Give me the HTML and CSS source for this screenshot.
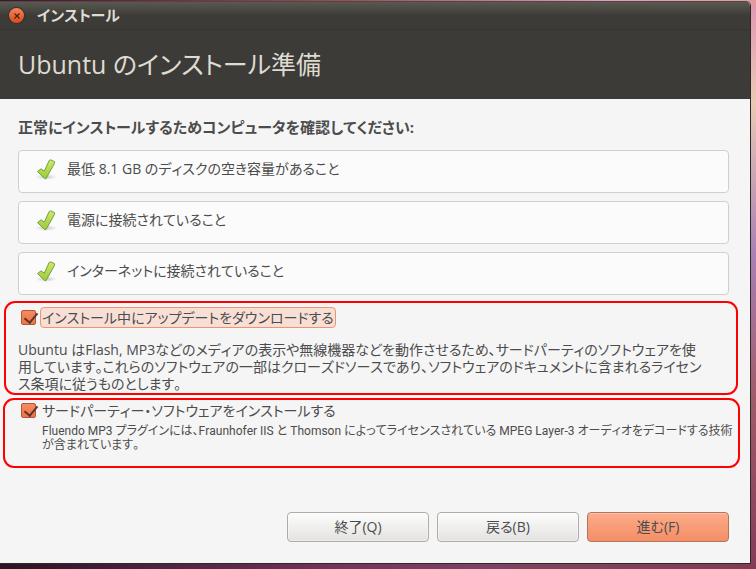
FILE: index.html
```html
<!DOCTYPE html>
<html lang="ja">

<head>
    <meta charset="UTF-8">
    <meta name="viewport" content="width=device-width, initial-scale=1.0">
    <title>インストール</title>
    <link rel="stylesheet" href="styles.css">
</head>

<body>
    <svg class="defs" width="0" height="0" aria-hidden="true">
        <defs>
            <linearGradient id="green" x1="0" y1="0" x2="0" y2="1">
                <stop offset="0" stop-color="#d3e56f" />
                <stop offset="1" stop-color="#9dca35" />
            </linearGradient>
            <radialGradient id="shadow">
                <stop offset="0" stop-color="#000" stop-opacity=".2" />
                <stop offset="1" stop-color="#000" stop-opacity="0" />
            </radialGradient>
            <symbol id="check" viewBox="0 0 22 22">
                <ellipse cx="11" cy="18" rx="11" ry="3" fill="url(#shadow)" />
                <path d="M2.5 12.6l3.6-2.8 3.2 2.4 4.9-10.8 1.6-.5 3.8 1.8-.1 1.6L11 19.6H9.8z" fill="url(#green)" stroke="#6ba23f" stroke-linejoin="round" />
            </symbol>
        </defs>
    </svg>

    <main class="window">
        <div class="titlebar">
            <button class="close" aria-label="閉じる">
                <svg width="6" height="6" viewBox="0 0 6 6"><path d="M.5.5l5 5M5.5.5l-5 5" stroke="#47210f" stroke-width="1.2" /></svg>
            </button>
            <span>インストール</span>
        </div>
        <header>
            <h1>Ubuntu のインストール準備</h1>
        </header>

        <div class="content">
            <h2>正常にインストールするためコンピュータを確認してください:</h2>
            <ul class="checks">
                <li><svg class="tick"><use href="#check" /></svg>最低 8.1 GB のディスクの空き容量があること</li>
                <li><svg class="tick"><use href="#check" /></svg>電源に接続されていること</li>
                <li><svg class="tick"><use href="#check" /></svg>インターネットに接続されていること</li>
            </ul>

            <section class="marked updates">
                <div class="option">
                    <input type="checkbox" id="update" checked>
                    <label for="update" class="focused">インストール中にアップデートをダウンロードする</label>
                </div>
                <p>Ubuntu はFlash, MP3などのメディアの表示や無線機器などを動作させるため、サードパーティのソフトウェアを使<br>用しています。これらのソフトウェアの一部はクローズドソースであり、ソフトウェアのドキュメントに含まれるライセン<br>ス条項に従うものとします。</p>
            </section>

            <section class="marked thirdparty">
                <div class="option">
                    <input type="checkbox" id="third" checked>
                    <label for="third">サードパーティー・ソフトウェアをインストールする</label>
                </div>
                <p class="note">Fluendo MP3 プラグインには、Fraunhofer IIS と Thomson によってライセンスされている MPEG Layer-3 オーディオをデコードする技術<br>が含まれています。</p>
            </section>
        </div>

        <footer>
            <button>終了(Q)</button>
            <button>戻る(B)</button>
            <button class="primary">進む(F)</button>
        </footer>
    </main>
</body>

</html>
```
FILE: styles.css
```css
* {
    box-sizing: border-box;
}

body {
    margin: 0;
    min-height: 100vh;
    padding: 1px 5px 5px 0;
    display: flex;
    flex-direction: column;
    color: #4c4c4c;
    font-family: "Open Sans", "Noto Sans CJK JP", sans-serif;
    font-size: 14px;
    line-height: 17px;
    font-feature-settings: "palt";
    font-kerning: none;
    background:
        linear-gradient(90deg, #2b1325, #74355a 45%, #7c4463 65%, #843c54) bottom / 100% 5px no-repeat,
        linear-gradient(90deg, #45102f, #a8465c 45%, #e39ac0 80%, #e59aa0) top / 100% 6px no-repeat,
        linear-gradient(#e095b4, #ecc8b4 18%, #a97fb4 45%, #a05b68 70%, #843c58) right / 6px 100% no-repeat,
        #321428;
}

.defs {
    position: absolute;
}

.window {
    flex: 1;
    display: flex;
    flex-direction: column;
    background: #f5f5f5;
    border: solid #2b2b29;
    border-width: 0 1px 1px 0;
    border-radius: 0 5px 0 0;
    overflow: hidden;
}

.titlebar {
    height: 29px;
    padding: 0 9px;
    display: flex;
    align-items: center;
    gap: 13px;
    color: #dfdbd2;
    font-size: 15px;
    font-weight: bold;
    background: linear-gradient(#5a5950, #3c3b37 50%);
    border-top: 1px solid #4a4943;
    border-bottom: 1px solid #353430;
}

.close {
    width: 15px;
    height: 15px;
    padding: 0;
    display: grid;
    place-items: center;
    border: 0;
    border-radius: 50%;
    background: linear-gradient(#f4845b, #df4a16);
    box-shadow: 0 0 0 1px #33322e;
}

header {
    height: 69px;
    padding: 0 18px 2px;
    display: flex;
    align-items: center;
    background: #3c3b37;
    color: #dfdbd2;
}

h1 {
    margin: 0;
    font-size: 25px;
    line-height: 32px;
    font-weight: normal;
}

.content {
    padding: 20px 10px 0 4px;
}

h2 {
    margin: 0 0 14px 14px;
    font-size: 15px;
    font-weight: bold;
}

.checks {
    list-style: none;
    margin: 0 11px 6px 14px;
    padding: 0;
    display: grid;
    gap: 8px;
}

.checks li {
    height: 43px;
    padding: 0 16px 6px;
    display: flex;
    align-items: center;
    gap: 10px;
    background: #fbfbfb;
    border: 1px solid #d0d0d0;
    border-radius: 4px;
}

.tick {
    width: 22px;
    height: 22px;
    margin-top: 2px;
}

.marked {
    border: 2px solid #f00;
    border-radius: 11px;
}

.marked p {
    margin: 0;
    white-space: nowrap;
}

.updates {
    height: 94px;
    margin: 0 2px 3px 0;
    padding: 4px 12px 0;
}

.marked.updates p {
    margin-top: 13px;
}

.thirdparty {
    height: 70px;
    margin-left: -1px;
    padding: 0 13px;
}

.option {
    display: flex;
    align-items: center;
    gap: 4px;
    margin-left: 3px;
}

.option label {
    padding: 1px;
    border: 1px solid transparent;
    border-radius: 4px;
    line-height: 17px;
}

.option .focused {
    background: #f8dfd6;
    border-color: #f2936d;
}

.option input {
    appearance: none;
    width: 15px;
    height: 15px;
    margin: 0;
    border: 1px solid #b5553a;
    border-radius: 2px;
    background: linear-gradient(#f58b62, #ee7443);
    position: relative;
}

.option input::after {
    content: "";
    position: absolute;
    left: 5px;
    top: -1px;
    width: 6px;
    height: 11px;
    border: solid #5a362a;
    border-width: 0 2px 2px 0;
    transform: rotate(40deg);
}

.marked .note {
    margin: 3px 0 0 24px;
    font-family: Roboto, "Noto Sans CJK JP", sans-serif;
    font-size: 12px;
    line-height: 14px;
}

footer {
    margin-top: auto;
    padding: 0 21px 21px;
    display: flex;
    justify-content: flex-end;
    gap: 8px;
}

footer button {
    width: 142px;
    height: 30px;
    padding: 0 0 2px;
    font: inherit;
    font-feature-settings: inherit;
    color: inherit;
    border: 1px solid #b0aca8;
    border-radius: 4px;
    background: linear-gradient(#fdfdfd, #e3e2e0);
    box-shadow: inset 0 0 0 1px rgba(255, 255, 255, .4);
}

footer .primary {
    border-color: #b0755e;
    background: linear-gradient(#fdab8b, #f48e66);
    box-shadow: inset 0 1px #fdc3ab;
}
```
